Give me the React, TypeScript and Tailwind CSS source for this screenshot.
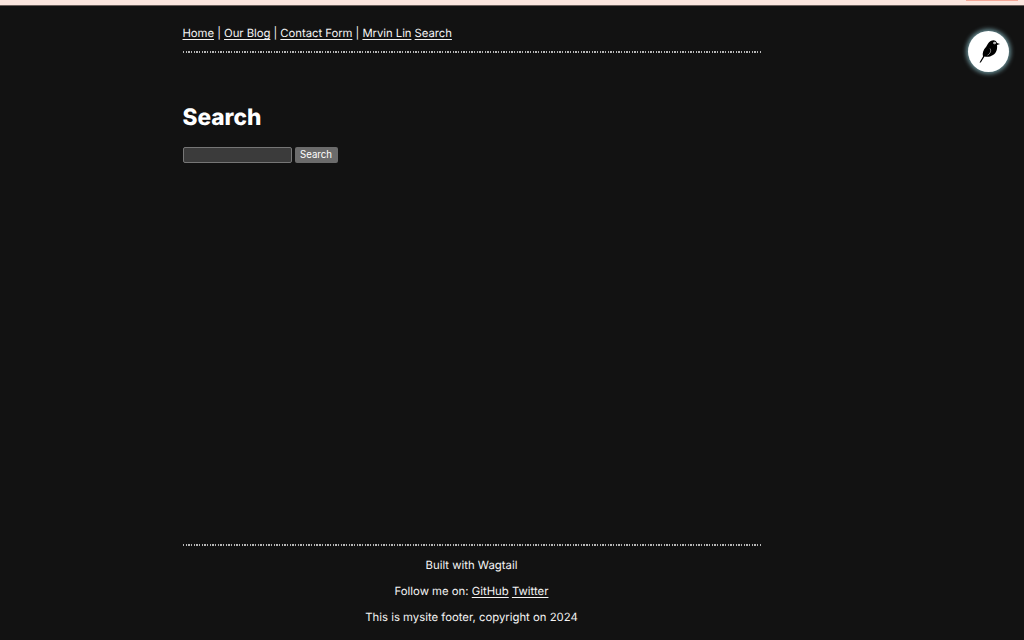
export default function App() {
  const link = "underline underline-offset-2";
  const dots = "h-[2px] bg-[repeating-linear-gradient(90deg,#b8b8b8_0,#b8b8b8_1.33px,transparent_1.33px,transparent_2.67px)]";
  return (
    <div className="relative h-[640px] w-[1024px] overflow-hidden bg-[#121212] text-[11.33px] leading-[20px] text-[#f4f4f4] [text-rendering:geometricPrecision]" style={{ fontFamily: "Inter, sans-serif" }}>
      <div className="relative h-[6px] border-b border-[#6b5f5c] bg-[#fbe6df]">
        <div className="absolute right-[6px] top-0 h-px w-[52px] bg-[#f5a898]" />
      </div>
      <div className="ml-[182.5px] flex h-[634px] w-[578px] flex-col">
        <nav className="mt-[17px] pb-[8px] tracking-[-0.05px]">
          <a className={link}>Home</a> | <a className={link}>Our Blog</a> | <a className={link}>Contact Form</a> | <a className={link}>Mrvin Lin</a> <a className={link}>Search</a>
        </nav>
        <div className={dots} />
        <h1 className="mt-[50px] text-[22.67px] font-extrabold leading-[30px] text-white">Search</h1>
        <form className="mt-[14px] flex items-center gap-[3px]">
          <input className="h-[16px] w-[109px] rounded-[2px] border border-[#767676] bg-[#3b3b3b]" />
          <button type="button" className="h-[16px] w-[43px] rounded-[2px] bg-[#6b6b6b] text-[9.67px] leading-[16px] text-white">Search</button>
        </form>
        <footer className="mt-auto mb-[13px] text-center">
          <div className={dots} />
          <p className="mt-[9px]">Built with Wagtail</p>
          <p className="mt-[6px]">Follow me on: <a className={link}>GitHub</a> <a className={link}>Twitter</a></p>
          <p className="mt-[6px]">This is mysite footer, copyright on 2024</p>
        </footer>
      </div>
      <button className="absolute left-[968px] top-[31px] flex h-[41px] w-[41px] items-center justify-center rounded-full bg-white shadow-[0_0_4px_2px_rgba(160,220,230,0.6)]">
        <svg viewBox="0 0 24 24" className="h-[24px] w-[24px]">
          <path fill="#000" d="M2.5 22.5 L6 16.5 C5 13 6.5 9.5 9 7 C10.5 5 11.5 1 15.5 0.4 C18 0 19.5 1.5 20 3 L23 4 L20 5 C20.5 9 19.5 13 16 15 C13 17 10 17 7.5 16.5 L3.8 22.5 Z" />
          <circle cx="17.6" cy="3" r="1.3" fill="#fff" />
          <circle cx="17.8" cy="3" r="0.5" fill="#000" />
          <path d="M13 8.5 C14.5 10.5 13.5 13.5 10.5 15.2" stroke="#fff" strokeWidth="0.5" fill="none" />
        </svg>
      </button>
    </div>
  );
}
